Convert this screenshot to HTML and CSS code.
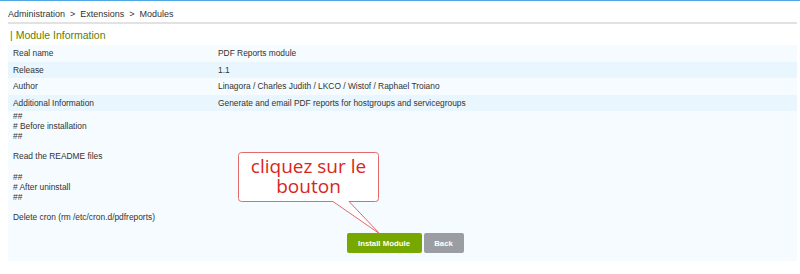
FILE: index.html
```html
<!DOCTYPE html>
<html lang="en">

<head>
    <meta charset="UTF-8">
    <title>Modules</title>
    <link rel="stylesheet" href="styles.css">
</head>

<body>
    <div class="topbar"></div>

    <div class="page">
        <!-- breadcrumb -->
        <div class="breadcrumb">Administration &nbsp;&gt;&nbsp; Extensions &nbsp;&gt;&nbsp; Modules</div>

        <h2 class="title">| Module Information</h2>

        <!-- module details -->
        <table class="info">
            <tr class="row-light">
                <td class="label">Real name</td>
                <td>PDF Reports module</td>
            </tr>
            <tr class="row-dark">
                <td class="label">Release</td>
                <td>1.1</td>
            </tr>
            <tr class="row-light">
                <td class="label">Author</td>
                <td>Linagora / Charles Judith / LKCO / Wistof / Raphael Troiano</td>
            </tr>
            <tr class="row-dark">
                <td class="label">Additional Information</td>
                <td>Generate and email PDF reports for hostgroups and servicegroups</td>
            </tr>
            <tr class="row-light">
                <td colspan="2" class="notes-cell">
                    <div class="notes">##
# Before installation
##

Read the README files

##
# After uninstall
##

Delete cron (rm /etc/cron.d/pdfreports)</div>
                    <div class="actions">
                        <button class="btn btn-install">Install Module</button>
                        <button class="btn btn-back">Back</button>
                    </div>
                </td>
            </tr>
        </table>

        <!-- callout bubble -->
        <div class="callout">
            <svg class="callout-shape" width="150" height="90" viewBox="0 0 150 90">
                <path d="M3.5,0.5 H137.5 Q140.5,0.5 140.5,3.5 V46.5 Q140.5,49.5 137.5,49.5 H111 L142,82 L95,49.5 H3.5 Q0.5,49.5 0.5,46.5 V3.5 Q0.5,0.5 3.5,0.5 Z"
                    fill="#ffffff" stroke="#e26a6a" stroke-width="1" />
            </svg>
            <div class="callout-text">
                <div class="callout-line">cliquez sur le</div>
                <div class="callout-line">bouton</div>
            </div>
        </div>
    </div>
</body>

</html>
```

FILE: styles.css
```css
/* base */
body {
    margin: 0;
    font-family: "Liberation Sans", Arial, sans-serif;
    color: #333;
    background-color: #fff;
}

.topbar {
    height: 1px;
    background-color: #4ea6e2;
}

.page {
    position: relative;
    padding: 0 3px 0 8px;
}

/* breadcrumb */
.breadcrumb {
    font-size: 9px;
    line-height: 12px;
    padding: 7px 0 2px 0;
    border-bottom: 2px solid #e2e2e2;
    color: #333;
}

/* title */
.title {
    margin: 0;
    padding: 4px 0 0 2px;
    height: 17px;
    font-size: 10.5px;
    line-height: 14px;
    font-weight: normal;
    color: #5f7d00;
}

/* info table */
.info {
    width: 100%;
    border-collapse: collapse;
    font-size: 8.4px;
    color: #333;
}

.info td {
    padding: 0 0 0 5px;
    height: 16.5px;
    vertical-align: middle;
}

.info td.label {
    width: 200px;
}

.row-light {
    background-color: #f5fbff;
}

.row-dark {
    background-color: #e9f6fe;
}

.info td.notes-cell {
    vertical-align: top;
    padding: 0 0 8px 5px;
}

.notes {
    width: fit-content;
    white-space: pre-line;
    line-height: 10.1px;
}

.actions {
    display: flex;
    justify-content: center;
    gap: 2px;
    margin-top: 11px;
}

.btn {
    height: 20px;
    border: none;
    border-radius: 2px;
    color: #fff;
    font-family: "Liberation Sans", Arial, sans-serif;
    font-size: 7.8px;
    font-weight: bold;
    padding: 0;
}

.btn-install {
    width: 75px;
    background-color: #76a800;
}

.btn-back {
    width: 40px;
    background-color: #9a9ea3;
}

/* callout */
.callout {
    position: absolute;
    left: 238px;
    top: 151px;
    width: 141px;
    height: 50px;
}

.callout-shape {
    position: absolute;
    left: 0;
    top: 0;
    overflow: visible;
}

.callout-text {
    position: relative;
    text-align: center;
    font-family: "Open Sans", "Noto Sans", sans-serif;
    font-size: 19px;
    color: #d9261c;
    padding-top: 4px;
}

.callout-line {
    height: 20px;
    line-height: 20px;
}
```
